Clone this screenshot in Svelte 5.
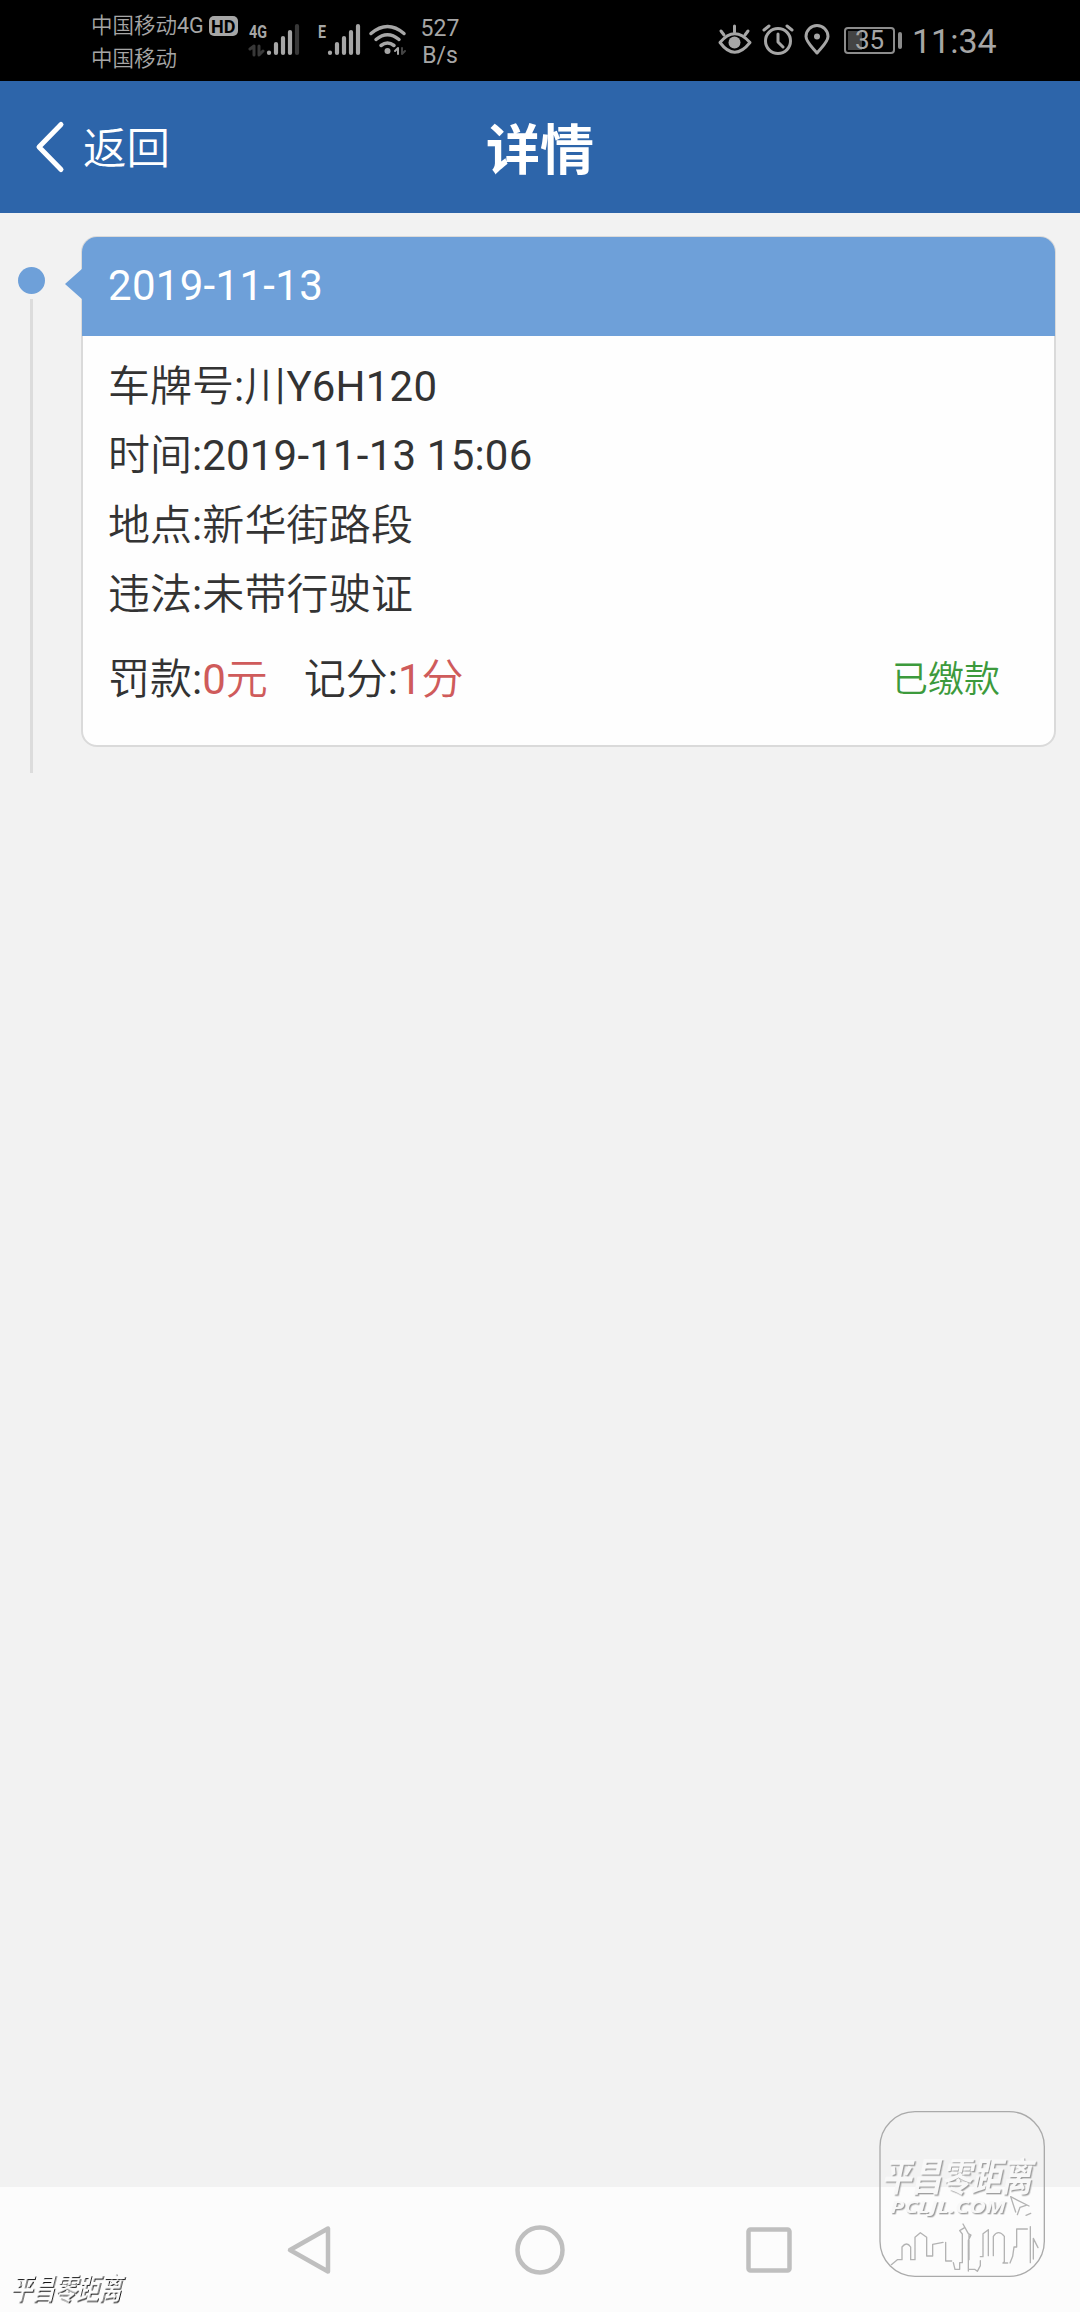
<script lang="ts">
	interface Violation {
		date: string;
		fields: { label: string; value: string }[];
		fine: string;
		points: string;
		status: string;
	}

	const violation: Violation = {
		date: '2019-11-13',
		fields: [
			{ label: '车牌号', value: '川Y6H120' },
			{ label: '时间', value: '2019-11-13 15:06' },
			{ label: '地点', value: '新华街路段' },
			{ label: '违法', value: '未带行驶证' }
		],
		fine: '0元',
		points: '1分',
		status: '已缴款'
	};
</script>

<div class="screen">
	<div class="status-bar">
		<div class="carriers">
			<div class="carrier"><span>中国移动4G</span><span class="hd">HD</span></div>
			<div class="carrier"><span>中国移动</span></div>
		</div>
		<svg class="signal-4g" width="52" height="32" viewBox="0 0 52 32">
			<text x="0" y="14" textLength="18" lengthAdjust="spacingAndGlyphs" class="net">4G</text>
			<path d="M1 25l4-3v9M10 22v9l4-4" class="dim-line" />
			<path d="M20 28.500v.5M27 20v9M34 14v15M41 8v21" class="bars" />
			<path d="M48 2v27" class="bars dim" />
		</svg>
		<svg class="signal-e" width="44" height="32" viewBox="0 0 44 32">
			<text x="0" y="14" textLength="8" lengthAdjust="spacingAndGlyphs" class="net">E</text>
			<path d="M12 28.500v.5M19 20v9M26 14v15M33 8v21M40 2v27" class="bars" />
		</svg>
		<svg class="wifi" width="38" height="32" viewBox="0 0 38 32">
			<path d="M2 9.500Q18.500-4.500 35 9.500M7 15.500q11.500-9.500 23 0M12 21.500q6.500-5 13 0" />
			<circle cx="18.500" cy="27" r="3" />
			<path d="M26 27l3-3v6" class="thin" />
			<path d="M33 24v6l3-3" class="thin dark" />
		</svg>
		<div class="speed">
			<div>527</div>
			<div>B/s</div>
		</div>
		<svg class="eye" width="34" height="32" viewBox="0 0 34 32">
			<path d="M2 18.500Q16.500 1 32 18.500Q16.500 38 2 18.500Z" />
			<path d="M16.500 2v6M3 7l3 4M30 7l-3 4" />
			<circle cx="16.500" cy="18.500" r="6" />
		</svg>
		<svg class="alarm" width="32" height="32" viewBox="0 0 32 32">
			<circle cx="16" cy="17" r="12.500" />
			<path d="M16 10v8l5 5M2 6l5-4M25 2l5 4" />
		</svg>
		<svg class="pin" width="26" height="32" viewBox="0 0 26 32">
			<path d="M13 29C9 24 2 18 2 12.500a11 11 0 0 1 22 0C24 18 17 24 13 29Z" />
			<circle cx="13" cy="12.500" r="3" />
		</svg>
		<div class="battery"><span class="level">35</span></div>
		<div class="clock">11:34</div>
	</div>

	<header class="nav">
		<div class="back">
			<svg width="30" height="52" viewBox="0 0 30 52">
				<path d="M26 3.500L4 26L26 48.500" />
			</svg>
			<span>返回</span>
		</div>
		<h1>详情</h1>
	</header>

	<main>
		<div class="rail">
			<span class="dot"></span>
			<span class="line"></span>
		</div>
		<section class="card">
			<div class="card-header">{violation.date}</div>
			<div class="card-body">
				{#each violation.fields as field}
					<div class="row">{field.label}:<span class="value">{field.value}</span></div>
				{/each}
				<div class="summary">
					<span>罚款:<em>{violation.fine}</em></span>
					<span class="points">记分:<em>{violation.points}</em></span>
					<span class="paid">{violation.status}</span>
				</div>
			</div>
		</section>
	</main>

	<nav class="system-nav">
		<svg width="50" height="60" viewBox="0 0 50 60">
			<path d="M4 30L42 8.500V51.500Z" />
		</svg>
		<svg width="50" height="60" viewBox="0 0 50 60">
			<circle cx="25" cy="30" r="22.500" />
		</svg>
		<svg width="50" height="60" viewBox="0 0 50 60">
			<rect x="4.500" y="9.500" width="41" height="41" rx="2" />
		</svg>
	</nav>

	<svg class="watermark" width="220" height="222" viewBox="0 0 660 666">
		<rect x="60" y="65" width="493" height="494" rx="105" class="frame" />
		<g class="emboss">
			<text transform="translate(64 304) skewX(-12)" textLength="450" lengthAdjust="spacingAndGlyphs" class="name">平昌零距离</text>
			<text x="91" y="370" textLength="346" lengthAdjust="spacingAndGlyphs" class="site">PCLJL.COM</text>
		</g>
		<path class="cursor" d="M452 320l15 46M452 320l55 28M472 374l8-22l18-6M498 376l14-6" />
		<path
			class="skyline"
			d="M94 524l18-15h14v-38q14-18 26 0v38h13v-67l16-14l19 14v56h18v-35l31-6M257 457v56h18M280 518l5 20h14v-20h8v-86l-8-10l16-10M309 402l16 29l8 4l-8 16v92M327 435v74M325 538h19l8 6l9-17v-15M361 500h8v-69l16-12v78M400 497v-58q15-22 33 0v76l-4 4h14M450 519l8-20l4-28h8v-54h32M511 410v108M520 445v62M520 445l14 28"
		/>
	</svg>

	<svg class="stamp" width="130" height="48" viewBox="0 0 130 48">
		<text transform="translate(10 34.500) skewX(-14)" textLength="111" lengthAdjust="spacingAndGlyphs">平昌零距离</text>
	</svg>
</div>

<style>
	:global(body) {
		background: #f2f2f2;
	}

	.screen {
		position: relative;
		display: flex;
		flex-direction: column;
		width: 1080px;
		height: 2312px;
		background: #f2f2f2;
		color: #333;
		font-family: Roboto, 'Noto Sans CJK SC DemiLight', 'Noto Sans CJK SC Light', 'Noto Sans CJK SC', sans-serif;
		font-kerning: none;
	}

	svg {
		display: block;
		flex-shrink: 0;
		overflow: visible;
		fill: none;
		stroke-linecap: round;
		stroke-linejoin: round;
	}

	.status-bar {
		display: flex;
		align-items: flex-start;
		height: 81px;
		box-sizing: border-box;
		padding-left: 91px;
		background: #000;
		color: #a6a6a6;
		flex-shrink: 0;
	}

	.status-bar svg {
		margin-top: 24px;
		stroke: #a6a6a6;
		stroke-width: 3;
	}

	.carriers {
		width: 158px;
		padding-top: 9px;
		font-size: 21.500px;
	}

	.carrier {
		display: flex;
		align-items: center;
		height: 33px;
		line-height: 33px;
		white-space: nowrap;
	}

	.hd {
		width: 29px;
		height: 20px;
		margin-left: 5px;
		border-radius: 5px;
		background: #a6a6a6;
		color: #000;
		font-size: 18px;
		font-weight: 700;
		line-height: 21px;
		text-align: center;
	}

	.net {
		fill: #a6a6a6;
		stroke: none;
		font-size: 18px;
		font-weight: 700;
	}

	.status-bar .bars {
		stroke-width: 4.200;
	}

	.status-bar .dim,
	.status-bar .dim-line {
		stroke: #383838;
	}

	.status-bar .signal-e {
		margin-left: 17px;
	}

	.status-bar .wifi {
		margin-left: 7px;
		stroke-width: 3.500;
	}

	.wifi circle,
	.eye circle,
	.pin circle {
		fill: #a6a6a6;
		stroke: none;
	}

	.wifi .thin {
		stroke-width: 2;
	}

	.wifi .dark {
		stroke: #444;
	}

	.speed {
		width: 60px;
		margin-left: 3px;
		padding-top: 15px;
		font-size: 23px;
		line-height: 27px;
		text-align: center;
	}

	.status-bar .eye {
		margin-left: 248px;
	}

	.status-bar .alarm {
		margin-left: 10px;
	}

	.status-bar .pin {
		margin-left: 10px;
	}

	.battery {
		position: relative;
		box-sizing: border-box;
		width: 51px;
		height: 27px;
		margin: 27px 0 0 14px;
		border: 2px solid #8c8c8c;
		border-radius: 4px;
		background: linear-gradient(#444, #444) 2px 2px / 14px 19px no-repeat;
	}

	.battery::after {
		position: absolute;
		top: 3px;
		left: 52px;
		width: 4px;
		height: 17px;
		border-radius: 2px;
		background: #8c8c8c;
		content: '';
	}

	.level {
		display: block;
		padding-left: 9px;
		font-size: 26px;
		line-height: 23px;
	}

	.clock {
		margin: 21px 0 0 17px;
		font-size: 34px;
		line-height: 40px;
	}

	.nav {
		display: grid;
		grid-template-columns: 1fr auto 1fr;
		align-items: center;
		height: 132px;
		flex-shrink: 0;
		background: #2d65aa;
		color: #fff;
	}

	.back {
		display: flex;
		align-items: center;
		padding-left: 35px;
		font-size: 43.500px;
	}

	.back svg {
		stroke: #fff;
		stroke-width: 5;
	}

	.back span {
		margin-left: 18px;
		padding-top: 6px;
		line-height: 52px;
	}

	h1 {
		margin: 9px 0 0;
		font-family: Roboto, 'Noto Sans CJK SC', sans-serif;
		font-size: 54px;
		font-weight: 700;
		line-height: 60px;
	}

	main {
		display: flex;
		align-items: flex-start;
		flex: 1;
		padding: 23px 24px 0 0;
	}

	.rail {
		display: flex;
		flex-direction: column;
		align-items: center;
		width: 27px;
		height: 506px;
		padding: 31px 37px 0 18px;
	}

	.dot {
		width: 27px;
		height: 27px;
		border-radius: 50%;
		background: #6ea0d9;
	}

	.line {
		flex: 1;
		width: 3px;
		margin-top: 5px;
		background: #dcdcdc;
	}

	.card {
		position: relative;
		flex: 1;
		box-sizing: border-box;
		height: 511px;
		margin-left: -1px;
		border: 2px solid #dadada;
		border-radius: 16px;
		background: #fefefe;
		font-size: 42px;
	}

	.card::before {
		position: absolute;
		top: 30px;
		left: -18px;
		border: 16px solid transparent;
		border-right: 18px solid #6ea0d9;
		border-left: 0;
		content: '';
	}

	.card-header {
		height: 99px;
		margin: -1px -1px 0;
		padding-left: 26px;
		border-radius: 15px 15px 0 0;
		background: #6ea0d9;
		color: #fff;
		letter-spacing: 0.3px;
		line-height: 97px;
	}

	.card-body {
		padding: 16px 54px 0 25px;
	}

	.row {
		height: 69.300px;
		line-height: 69.300px;
	}

	.value {
		letter-spacing: 0.2px;
	}

	.summary {
		display: flex;
		margin-top: 21px;
		line-height: 60px;
	}

	.summary em {
		color: #cf5b5b;
		font-style: normal;
	}

	.points {
		margin-left: 36px;
	}

	.paid {
		margin-left: auto;
		color: #3c9a3c;
		font-size: 36px;
	}

	.system-nav {
		display: flex;
		justify-content: center;
		gap: 179px;
		height: 125px;
		padding-top: 33px;
		box-sizing: border-box;
		margin-top: auto;
		flex-shrink: 0;
		background: #fcfcfc;
	}

	.system-nav svg {
		stroke: #bfbfbf;
		stroke-width: 4.500;
	}

	.watermark {
		position: absolute;
		left: 860px;
		top: 2090px;
	}

	.frame {
		stroke: #aaa;
		stroke-width: 4;
	}

	.emboss {
		fill: #f8f8f8;
		filter: drop-shadow(4px 4px 0 #a0a0a0);
	}

	.name {
		font-family: 'Noto Sans CJK SC', sans-serif;
		font-size: 118px;
		font-weight: 700;
	}

	.site {
		font-family: 'Open Sans', sans-serif;
		font-size: 50px;
		font-style: italic;
		font-weight: 700;
	}

	.cursor,
	.skyline {
		stroke: #b3b3b3;
		stroke-width: 4;
	}

	.stamp {
		position: absolute;
		left: 0;
		top: 2264px;
	}

	.stamp text {
		fill: #fcfcfc;
		font-family: 'Noto Sans CJK SC', sans-serif;
		font-size: 29px;
		font-weight: 700;
		filter: drop-shadow(1.500px 1.500px 0 #111);
	}
</style>
